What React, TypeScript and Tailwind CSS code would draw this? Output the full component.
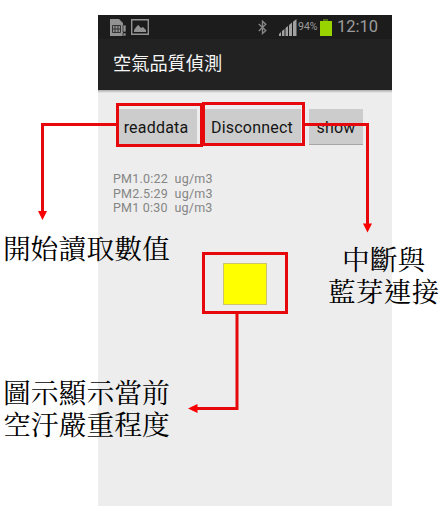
import React from "react";

const captionFont =
  "font-['Liberation_Serif','Noto_Serif_CJK_TC','Noto_Serif_TC','Noto_Sans_CJK_TC',serif] text-[27.8px] leading-[32px] whitespace-nowrap text-black";

function StatusBar() {
  return (
    <header className="flex h-6 shrink-0 items-center bg-[#1c1c1c] pl-3 pr-[14px] text-[#9c9c9c]">
      <svg width="16" height="17" viewBox="0 0 16 17" fill="none">
        <path d="M0 0h9l4 4v13H0z" fill="#929292" />
        <path d="M2.5 6.5h8v7h-8zM5 6.5v7M8 6.5v7M2.5 10h8" stroke="#333" />
        <path d="M13 6h3v7h-3zM13 14h3v3h-3z" fill="#929292" stroke="#1c1c1c" strokeWidth=".7" />
      </svg>
      <svg className="ml-[5px]" width="18" height="16" viewBox="0 0 18 16">
        <path d="M.7.7h16.6v14.600H.7z" fill="none" stroke="#929292" strokeWidth="1.4" />
        <path d="M3 13v-2l3-4 1.500-1L9 8l1 1 2-1 3 3v2z" fill="#929292" />
      </svg>
      <div className="ml-auto flex items-center">
        <svg width="9" height="15" viewBox="0 0 9 15" fill="none" stroke="#858585" strokeWidth="1.4">
          <path d="M.8 4l7 6.5-3.300 3V1.200l3.300 3L.8 11" />
        </svg>
        <svg className="ml-[12px]" width="18" height="17" viewBox="0 0 18 17" fill="#a0a0a0">
          <path d="M0 17v-2l2-2v4zM3 17v-5l2.500-2v7zM6.500 17V9L9 7v10zM10 17V6l3-2.500V17zM14 17V2.700L17.500 0v17z" />
        </svg>
        <span className="ml-px w-[21px] font-[Roboto,sans-serif] text-[10.500px] leading-none whitespace-nowrap">94%</span>
        <svg className="ml-px" width="12" height="17" viewBox="0 0 12 17">
          <path d="M3 0h5v2H3z" fill="#506b19" />
          <path d="M0 2h12v15H0z" fill="#98d300" />
        </svg>
        <span className="ml-[5px] w-[41px] font-[Roboto,sans-serif] text-[16.500px] leading-none whitespace-nowrap">12:10</span>
      </div>
    </header>
  );
}

function Button({ label, size }: { label: string; size: string }) {
  return (
    <button
      className={`${size} h-9 border-b border-[#a6a6a6] bg-[#cccccc] pt-[2px] font-[Roboto,sans-serif] text-base leading-none tracking-[0.2px] whitespace-nowrap text-[#151515]`}
    >
      {label}
    </button>
  );
}

function Connectors() {
  return (
    <svg className="absolute inset-0" width="446" height="519" fill="none" stroke="#e6080b" strokeWidth="3">
      <path d="M117.500 104.500h84v41h-84zM203.500 103.500h100v41h-100zM203.500 253.500h83v59h-83z" />
      <path d="M116 124.500H42.500V212M305 124.500h62.500V225M237 314v94.500h-41" />
      <path d="M38 211h9l-4.500 9zM363 223.500h9l-4.500 9zM197.500 404v9l-9.500-4.500z" fill="#fa0000" stroke="none" />
    </svg>
  );
}

export default function App() {
  return (
    <div className="relative h-[519px] w-[446px] overflow-hidden bg-white pt-[15px] pl-[98px]">
      <main className="flex h-[491px] w-[294px] flex-col bg-[#ededed]">
        <StatusBar />
        <div className="h-[51px] shrink-0 bg-[#222222] pt-[11px] pl-[15px] font-[Roboto,'Noto_Sans_CJK_TC',sans-serif] text-[18.200px] leading-7 text-[#f5f5f5]">
          空氣品質偵測
        </div>
        <div className="h-[3px] shrink-0 bg-linear-to-b from-[#aaaaaa] to-[#ededed]" />
        <div className="flex pt-[16px] pl-5">
          <Button label="readdata" size="w-[79px] pr-[3px]" />
          <Button label="Disconnect" size="ml-[8px] w-[96px] pr-[2px]" />
          <Button label="show" size="ml-[8px] w-[54px]" />
        </div>
        <div className="mt-[27px] ml-[15px] font-[Roboto,sans-serif] text-[12.500px] leading-[14.700px] tracking-[0.22px] whitespace-pre text-[#858585]">
          <p>PM1.0:22  ug/m3</p>
          <p>PM2.5:29  ug/m3</p>
          <p>PM1 0:30  ug/m3</p>
        </div>
        <div className="mt-[47px] ml-[125px] h-[42px] w-11 border border-[#cbc56f] bg-[#ffff00]" />
      </main>
      <Connectors />
      <p className={`absolute top-[234px] left-[3px] ${captionFont}`}>開始讀取數值</p>
      <p className={`absolute top-[245px] left-[328px] text-center ${captionFont}`}>
        中斷與<br />藍芽連接
      </p>
      <p className={`absolute top-[378px] left-[3px] ${captionFont}`}>
        圖示顯示當前<br />空汙嚴重程度
      </p>
    </div>
  );
}
